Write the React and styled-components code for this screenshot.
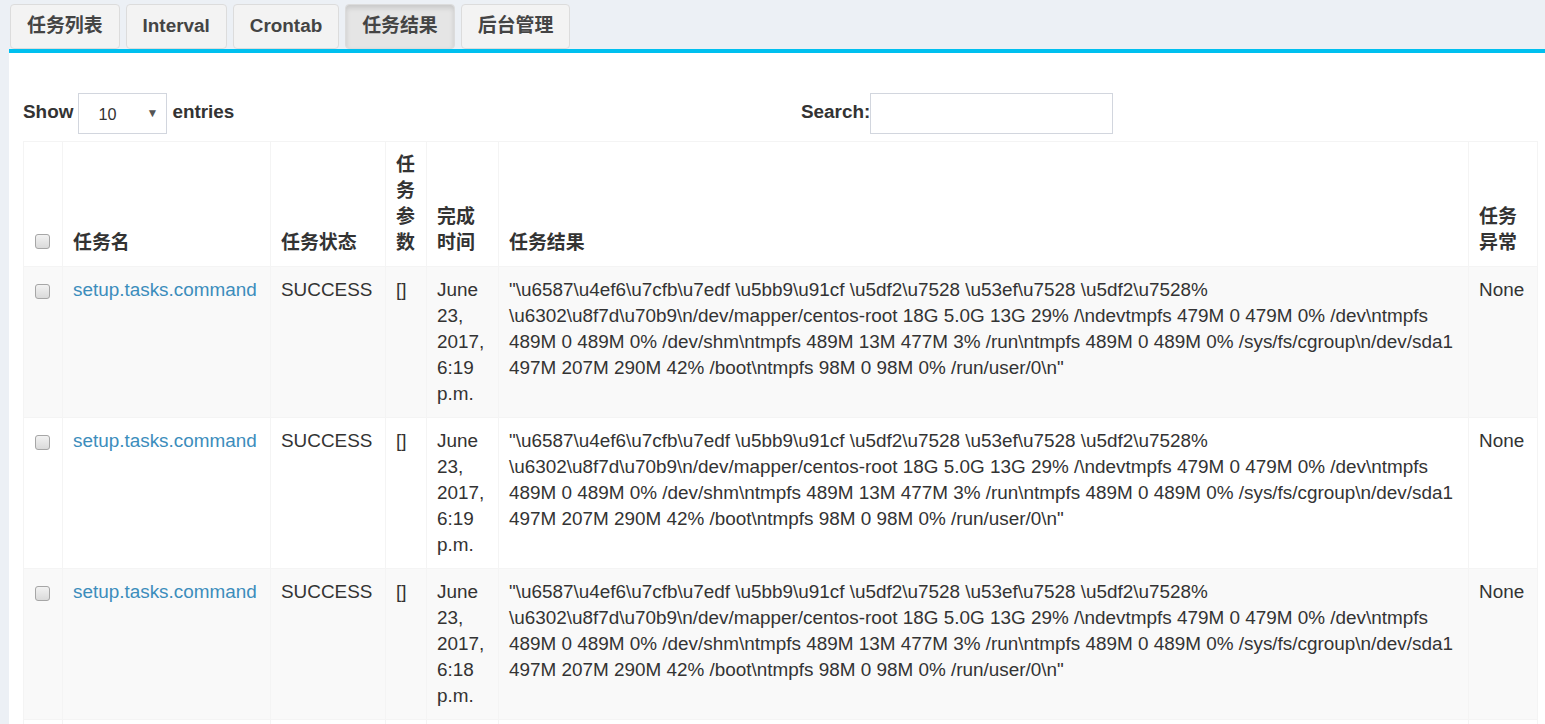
import React from 'react';
import styled, { createGlobalStyle } from 'styled-components';

const GlobalStyle = createGlobalStyle`
  html, body {
    margin: 0;
    padding: 0;
    overflow: hidden;
  }
  body {
    background: #ecf0f5;
    font-family: "Liberation Sans", Arial, "Noto Sans CJK SC", sans-serif;
    font-size: 18.9px;
    line-height: 26px;
    color: #333;
  }
`;

const tabs = ['任务列表', 'Interval', 'Crontab', '任务结果', '后台管理'];
const activeTab = '任务结果';

const RESULT =
  '"\\u6587\\u4ef6\\u7cfb\\u7edf \\u5bb9\\u91cf \\u5df2\\u7528 \\u53ef\\u7528 \\u5df2\\u7528% ' +
  '\\u6302\\u8f7d\\u70b9\\n/dev/mapper/centos-root 18G 5.0G 13G 29% /\\ndevtmpfs 479M 0 479M 0% /dev\\ntmpfs ' +
  '489M 0 489M 0% /dev/shm\\ntmpfs 489M 13M 477M 3% /run\\ntmpfs 489M 0 489M 0% /sys/fs/cgroup\\n/dev/sda1 ' +
  '497M 207M 290M 42% /boot\\ntmpfs 98M 0 98M 0% /run/user/0\\n"';

const rows = [
  { name: 'setup.tasks.command', time: '6:19' },
  { name: 'setup.tasks.command', time: '6:19' },
  { name: 'setup.tasks.command', time: '6:18' },
  { name: 'setup.tasks.command', time: '6:18' }
];

export default function App() {
  return (
    <>
      <GlobalStyle />
      <TabBar>
        {tabs.map(t => (
          <Tab key={t} active={t === activeTab}>
            {t}
          </Tab>
        ))}
      </TabBar>
      <Panel>
        <Controls>
          <Label>
            <LabelText>Show</LabelText>
            <SelectWrap>
              <Select defaultValue="10">
                <option value="10">10</option>
                <option value="25">25</option>
                <option value="50">50</option>
                <option value="100">100</option>
              </Select>
              <Arrow>▼</Arrow>
            </SelectWrap>
            <LabelText>entries</LabelText>
          </Label>
          <SearchLabel>
            <LabelText>Search:</LabelText>
            <SearchInput type="search" />
          </SearchLabel>
        </Controls>
        <Table>
          <colgroup>
            <col style={{ width: 39 }} />
            <col style={{ width: 208 }} />
            <col style={{ width: 115 }} />
            <col style={{ width: 41 }} />
            <col style={{ width: 72 }} />
            <col style={{ width: 970 }} />
            <col style={{ width: 69 }} />
          </colgroup>
          <thead>
            <tr>
              <Th>
                <Check type="checkbox" />
              </Th>
              <Th>任务名</Th>
              <Th>任务状态</Th>
              <Th>任务参数</Th>
              <Th>完成时间</Th>
              <Th>任务结果</Th>
              <Th>任务异常</Th>
            </tr>
          </thead>
          <tbody>
            {rows.map((r, i) => (
              <Row key={i} striped={i % 2 === 0}>
                <Td>
                  <Check type="checkbox" />
                </Td>
                <Td>
                  <Link href="#">{r.name}</Link>
                </Td>
                <Td>SUCCESS</Td>
                <Td>[]</Td>
                <Td>June 23, 2017, {r.time} p.m.</Td>
                <Td>{RESULT}</Td>
                <Td>None</Td>
              </Row>
            ))}
          </tbody>
        </Table>
      </Panel>
    </>
  );
}

const TabBar = styled.div`
  display: flex;
  gap: 6px;
  padding: 4px 0 0 10px;
`;

const Tab = styled.button`
  height: 45px;
  padding: 0 16px 1px;
  border: 1px solid #dcdcdc;
  border-radius: 4px;
  background: ${p => (p.active ? '#e5e5e5' : '#f3f3f3')};
  box-shadow: ${p => (p.active ? 'inset 0 3px 5px rgba(0, 0, 0, 0.125)' : 'none')};
  color: #444;
  font: bold 18.9px/26px "Liberation Sans", Arial, "Noto Sans CJK SC", sans-serif;
  cursor: pointer;
`;

const Panel = styled.div`
  width: 1514px;
  margin-left: 9px;
  padding: 40px 14px 0;
  background: #fff;
  border-top: 4px solid #00c0ef;
`;

const Controls = styled.div`
  display: grid;
  grid-template-columns: 1fr 1fr;
  align-items: start;
  height: 40px;
  margin-bottom: 8px;
`;

const Label = styled.label`
  display: flex;
  align-items: flex-start;
  gap: 5px;
  font-weight: bold;
`;

const LabelText = styled.span`
  margin-top: 6px;
  line-height: 26px;
`;

const SearchLabel = styled(Label)`
  gap: 0;
  padding-left: 21px;
`;

const SelectWrap = styled.span`
  position: relative;
  display: inline-block;
`;

const Select = styled.select`
  appearance: none;
  width: 89px;
  height: 41px;
  padding: 1px 0 0 19px;
  border: 1px solid #d2d6de;
  border-radius: 0;
  background: #fff;
  color: #333;
  font: 16.2px "Liberation Sans", Arial, sans-serif;
`;

const Arrow = styled.span`
  position: absolute;
  right: 9px;
  top: 13px;
  font-size: 12px;
  line-height: 14px;
  color: #555;
  pointer-events: none;
`;

const SearchInput = styled.input`
  width: 243px;
  height: 41px;
  box-sizing: border-box;
  border: 1px solid #d2d6de;
  padding: 0 8px;
  font: 16px "Liberation Sans", Arial, sans-serif;
`;

const Table = styled.table`
  width: 1514px;
  table-layout: fixed;
  border-collapse: collapse;
  border: 1px solid #f4f4f4;
`;

const Th = styled.th`
  padding: 10px;
  border: 1px solid #f4f4f4;
  text-align: left;
  vertical-align: bottom;
  font-weight: bold;
`;

const Row = styled.tr`
  background: ${p => (p.striped ? '#f9f9f9' : '#fff')};
`;

const Td = styled.td`
  padding: 10px;
  border: 1px solid #f4f4f4;
  vertical-align: top;
  word-wrap: break-word;
`;

const Check = styled.input`
  appearance: none;
  display: block;
  width: 15px;
  height: 15px;
  margin: 7px 0 7px 1px;
  border: 1px solid #a6a6a6;
  border-radius: 3px;
  background: linear-gradient(#f2f2f2, #dadada);
  box-sizing: border-box;
`;

const Link = styled.a`
  color: #3c8dbc;
  text-decoration: none;
`;
